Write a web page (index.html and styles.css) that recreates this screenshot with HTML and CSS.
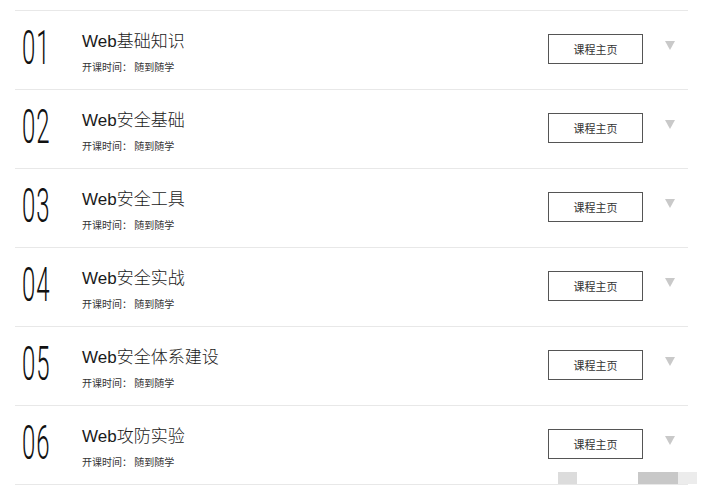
FILE: index.html
```html
<!DOCTYPE html>
<html lang="zh">
<head>
<meta charset="utf-8">
<title>课程列表</title>
<link rel="stylesheet" href="styles.css">
</head>
<body>
<div class="list">
  <div class="row">
    <div class="num"><span>01</span></div>
    <div class="info">
      <div class="title">Web基础知识</div>
      <div class="sub">开课时间： 随到随学</div>
    </div>
    <div class="btn">课程主页</div>
    <div class="arrow"></div>
  </div>
  <div class="row">
    <div class="num"><span>02</span></div>
    <div class="info">
      <div class="title">Web安全基础</div>
      <div class="sub">开课时间： 随到随学</div>
    </div>
    <div class="btn">课程主页</div>
    <div class="arrow"></div>
  </div>
  <div class="row">
    <div class="num"><span>03</span></div>
    <div class="info">
      <div class="title">Web安全工具</div>
      <div class="sub">开课时间： 随到随学</div>
    </div>
    <div class="btn">课程主页</div>
    <div class="arrow"></div>
  </div>
  <div class="row">
    <div class="num"><span>04</span></div>
    <div class="info">
      <div class="title">Web安全实战</div>
      <div class="sub">开课时间： 随到随学</div>
    </div>
    <div class="btn">课程主页</div>
    <div class="arrow"></div>
  </div>
  <div class="row">
    <div class="num"><span>05</span></div>
    <div class="info">
      <div class="title">Web安全体系建设</div>
      <div class="sub">开课时间： 随到随学</div>
    </div>
    <div class="btn">课程主页</div>
    <div class="arrow"></div>
  </div>
  <div class="row last">
    <div class="num"><span>06</span></div>
    <div class="info">
      <div class="title">Web攻防实验</div>
      <div class="sub">开课时间： 随到随学</div>
    </div>
    <div class="btn">课程主页</div>
    <div class="arrow"></div>
    <div class="scrap scrap-a"></div>
    <div class="scrap scrap-b"></div>
  </div>
</div>
</body>
</html>
```

FILE: styles.css
```css
html, body {
  margin: 0;
  padding: 0;
  background: #ffffff;
}

body {
  font-family: "Noto Sans CJK SC", "Liberation Sans", sans-serif;
  color: #222;
}

.list {
  margin-left: 15px;
  width: 673px;
  padding-top: 10px;
}

.row {
  position: relative;
  display: flex;
  align-items: center;
  height: 78px;
  border-top: 1px solid #e8e8e8;
}

.row.last {
  border-bottom: 1px solid #e8e8e8;
}

.num {
  width: 67px;
  padding-left: 7px;
  box-sizing: border-box;
  align-self: flex-start;
  padding-top: 13px;
}

.num span {
  display: inline-block;
  font-family: "Roboto", "Liberation Sans", sans-serif;
  font-weight: 300;
  font-size: 48px;
  line-height: 48px;
  color: #111;
  transform: scaleX(0.5);
  transform-origin: left center;
  letter-spacing: 2px;
}

.info {
  flex: 1;
  display: flex;
  flex-direction: column;
  align-self: flex-start;
  padding-top: 20px;
}

.title {
  font-family: "Liberation Sans", "Noto Sans CJK SC", sans-serif;
  font-weight: 300;
  font-size: 17px;
  line-height: 22px;
  color: #1a1a1a;
}

.sub {
  font-size: 10px;
  line-height: 14px;
  margin-top: 7px;
  color: #333;
}

.btn {
  width: 93px;
  height: 28px;
  border: 1px solid #555;
  display: flex;
  align-items: center;
  justify-content: center;
  font-size: 11px;
  color: #333;
  margin-right: 22px;
  margin-top: -2px;
}

.arrow {
  width: 0;
  height: 0;
  border-left: 5px solid transparent;
  border-right: 5px solid transparent;
  border-top: 9px solid #c9c9c9;
  margin-right: 13px;
  margin-top: -9px;
}

.scrap {
  position: absolute;
  top: 66px;
  height: 12px;
}

.scrap-a {
  left: 543px;
  width: 19px;
  background: #dcdcdc;
}

.scrap-b {
  left: 623px;
  width: 40px;
  background: #c8c8c8;
  box-shadow: 19px 0 0 #ececec;
}
```
